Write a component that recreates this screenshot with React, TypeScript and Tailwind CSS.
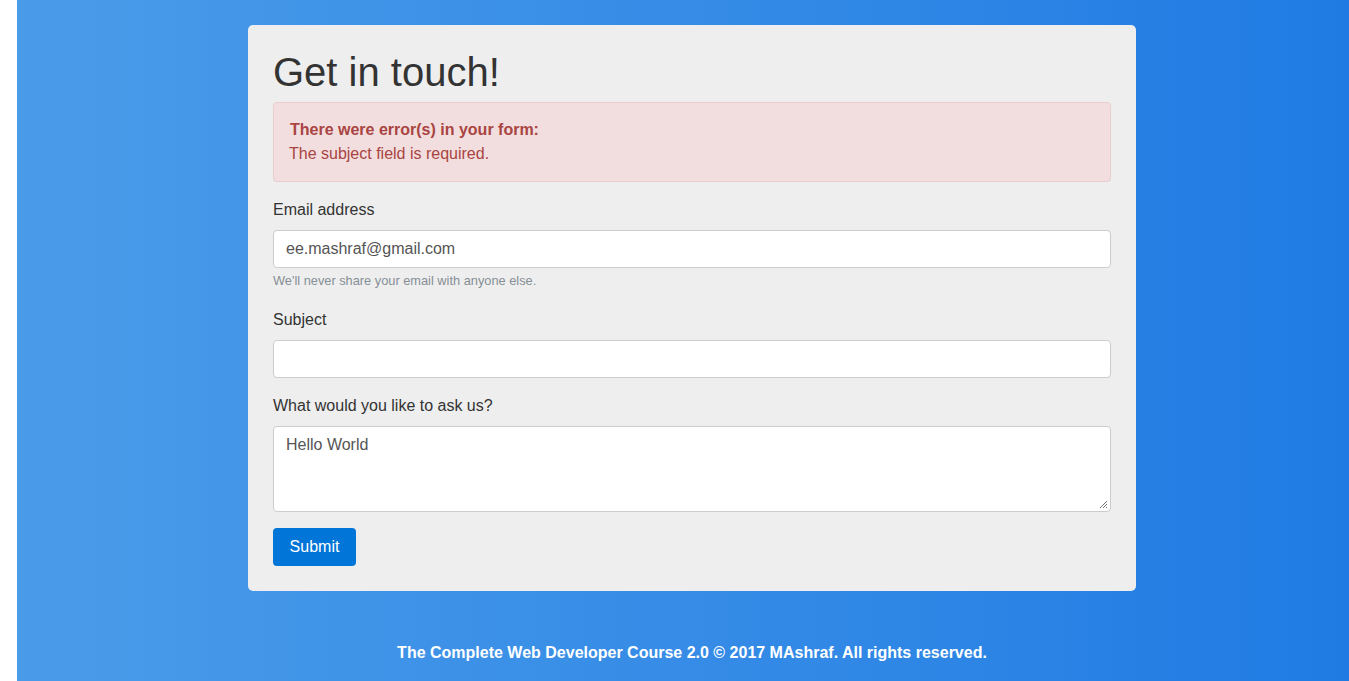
import React from "react";

export default function App() {
  return (
    <div
      className="flex h-[681px] w-full bg-white"
      style={{ fontFamily: '"Liberation Sans", Arial, Helvetica, sans-serif' }}
    >
      <div className="w-[17px] shrink-0 bg-white" />
      <div className="flex-1 bg-gradient-to-r from-[#4a9ce9] to-[#1f7be3] pl-[231px] pt-[25px]">
        <div className="w-[888px]">
          <div className="rounded-[5px] bg-[#eeeeee] p-[25px]">
            <h1 className="mb-2 text-[40px] leading-[44px] font-normal text-[#333333]">Get in touch!</h1>
            <div className="mb-4 rounded-[4px] border border-[#ebcccc] bg-[#f2dede] py-[15px] pl-[16px] pr-[15px] text-[16px] leading-6 text-[#a94442]">
              <p className="font-bold">There were error(s) in your form:</p>
              <p className="-ml-px">The subject field is required.</p>
            </div>
            <div className="mb-[17px]">
              <label className="mb-2 block text-[16px] leading-6 text-[#333333]">Email address</label>
              <div className="h-[38px] rounded-[4px] border border-[#cccccc] bg-white px-3 py-2 text-[16px] leading-5 text-[#555555]">
                ee.mashraf@gmail.com
              </div>
              <p className="mt-[3px] text-[12.8px] leading-[20px] text-[#868e96]">We'll never share your email with anyone else.</p>
            </div>
            <div className="mb-4">
              <label className="mb-2 block text-[16px] leading-6 text-[#333333]">Subject</label>
              <div className="h-[38px] rounded-[4px] border border-[#cccccc] bg-white" />
            </div>
            <div className="mb-4">
              <label className="mb-2 block text-[16px] leading-6 text-[#333333]">What would you like to ask us?</label>
              <div className="relative h-[86px] rounded-[4px] border border-[#cccccc] bg-white px-3 py-2 text-[16px] leading-5 text-[#555555]">
                Hello World
                <svg className="absolute bottom-[2px] right-[2px]" width="9" height="9" viewBox="0 0 9 9">
                  <path d="M8 1 L1 8 M8 4 L4 8 M8 7 L7 8" stroke="#777" strokeWidth="1" />
                </svg>
              </div>
            </div>
            <button className="h-[38px] w-[83px] rounded-[4px] bg-[#0275d8] text-center text-[16px] leading-5 text-white">Submit</button>
          </div>
          <p className="mt-[50px] text-center text-[16px] font-bold leading-6 text-white">
            The Complete Web Developer Course 2.0 © 2017 MAshraf. All rights reserved.
          </p>
        </div>
      </div>
    </div>
  );
}
